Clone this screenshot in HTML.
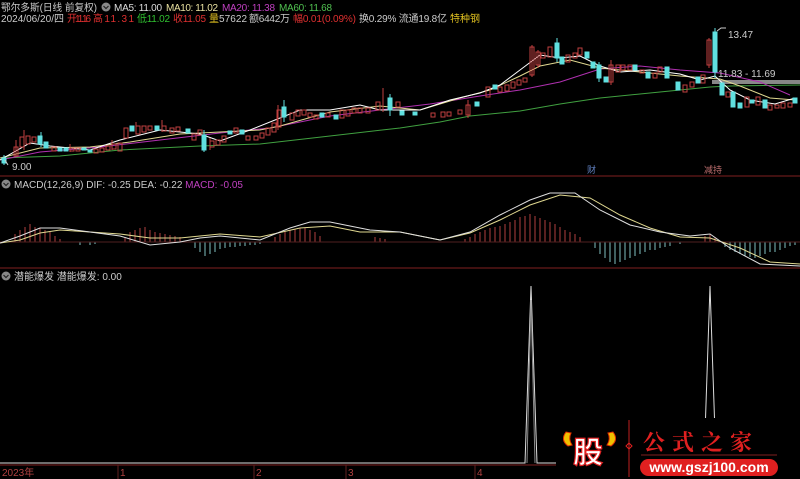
<!DOCTYPE html>
<html><head><meta charset="utf-8"><style>
body{margin:0;background:#000;width:800px;height:479px;overflow:hidden;font-family:"Liberation Sans","Noto Sans CJK SC",sans-serif}
svg{position:absolute;left:0;top:0}
.t{font-size:10px}
</style></head><body>
<svg width="800" height="479" viewBox="0 0 800 479">
<!-- header -->
<text x="1" y="11" class="t" fill="#ccc" textLength="96" lengthAdjust="spacingAndGlyphs">鄂尔多斯(日线 前复权)</text>
<circle cx="106" cy="7" r="4.5" fill="#888"/><path d="M103.5 6 l2.5 2.5 l2.5-2.5" stroke="#222" fill="none" stroke-width="1.2"/>
<text x="114" y="11" class="t" fill="#ddd" textLength="48">MA5: 11.00</text>
<text x="166" y="11" class="t" fill="#e8e0a0" textLength="52">MA10: 11.02</text>
<text x="222" y="11" class="t" fill="#c040c0" textLength="53">MA20: 11.38</text>
<text x="279" y="11" class="t" fill="#50c050" textLength="53">MA60: 11.68</text>
<text x="1" y="22" class="t" fill="#ccc" textLength="63">2024/06/20/四</text>
<text x="67" y="22" class="t" fill="#e03030" textLength="24">开11.16</text>
<text x="93" y="22" class="t" fill="#e03030" textLength="41">高11.31</text>
<text x="137" y="22" class="t" fill="#30c030" textLength="33">低11.02</text>
<text x="173" y="22" class="t" fill="#e03030" textLength="33">收11.05</text>
<text x="209" y="22" class="t" fill="#e0c020">量</text>
<text x="219" y="22" class="t" fill="#ccc" textLength="28">57622</text>
<text x="249" y="22" class="t" fill="#ccc" textLength="41">额6442万</text>
<text x="293" y="22" class="t" fill="#e03030" textLength="63">幅0.01(0.09%)</text>
<text x="359" y="22" class="t" fill="#ccc" textLength="88">换0.29% 流通19.8亿</text>
<text x="450" y="22" class="t" fill="#e0c020">特种钢</text>

<line x1="0" y1="176" x2="800" y2="176" stroke="#802020"/>
<line x1="0" y1="268" x2="800" y2="268" stroke="#802020"/>
<line x1="0" y1="465" x2="800" y2="465" stroke="#802020"/>
<rect x="712" y="80" width="88" height="4" fill="#888"/>
<polyline fill="none" stroke="#40a040" points="0,158 60,156 120,150 200,146 260,144 330,136 400,128 440,122 470,116 520,111 560,104 600,98 640,94 680,90 710,87 730,86 800,85"/>
<polyline fill="none" stroke="#b030b0" points="0,160 40,152 100,147 160,140 220,133 270,128 330,116 380,110 430,104 480,96 520,90 560,82 600,69 640,66 680,70 720,73 760,82 790,95"/>
<polyline fill="none" stroke="#e0d890" points="0,158 40,148 90,147 130,142 180,134 220,132 260,130 280,126 330,112 380,106 420,110 460,98 490,90 520,76 540,66 570,60 600,68 640,72 680,76 720,79 740,86 770,98 795,100"/>
<polyline fill="none" stroke="#fff" points="0,160 30,143 50,146 90,150 120,140 160,130 200,134 220,141 250,130 280,118 300,110 330,110 360,105 380,110 420,110 450,100 480,93 500,85 520,70 540,55 560,58 580,56 600,66 620,72 650,70 680,74 700,80 715,76 730,90 750,100 775,104 795,98"/>
<g fill="none" stroke="#c04040">
<path d="M24 130v20M16 140v16M70 144v8M112 140v10M136 122v12M162 120v12M210 138v12M278 105v25M383 88v24M468 100v18M532 45v32M538 50v18M611 60v25M709 38v30"/>
<rect x="14" y="147" width="4" height="9"/><rect x="20" y="137" width="4" height="10"/><rect x="26" y="136" width="4" height="8"/><rect x="32" y="137" width="4" height="5"/>
<rect x="52" y="147" width="4" height="4"/><rect x="70" y="148" width="4" height="3"/><rect x="76" y="148" width="4" height="3"/><rect x="94" y="149" width="4" height="4"/><rect x="100" y="148" width="4" height="4"/><rect x="106" y="146" width="4" height="4"/><rect x="112" y="144" width="4" height="5"/><rect x="118" y="143" width="4" height="8"/>
<rect x="124" y="128" width="4" height="10"/><rect x="136" y="126" width="4" height="8"/><rect x="142" y="126" width="4" height="6"/><rect x="148" y="126" width="4" height="4"/><rect x="162" y="126" width="4" height="5"/><rect x="170" y="128" width="4" height="5"/><rect x="176" y="127" width="4" height="4"/>
<rect x="192" y="134" width="4" height="6"/><rect x="198" y="130" width="4" height="5"/><rect x="210" y="141" width="4" height="6"/><rect x="216" y="140" width="4" height="5"/><rect x="222" y="136" width="4" height="6"/><rect x="234" y="128" width="4" height="5"/><rect x="246" y="136" width="4" height="4"/><rect x="254" y="136" width="4" height="4"/><rect x="260" y="133" width="4" height="5"/><rect x="266" y="128" width="4" height="7"/><rect x="272" y="123" width="4" height="9"/><rect x="277" y="110" width="4" height="17"/>
<rect x="290" y="113" width="4" height="7"/><rect x="296" y="110" width="4" height="6"/><rect x="302" y="110" width="4" height="5"/><rect x="308" y="113" width="4" height="4"/><rect x="314" y="115" width="4" height="4"/><rect x="326" y="113" width="4" height="4"/><rect x="340" y="110" width="4" height="8"/><rect x="346" y="110" width="4" height="6"/><rect x="352" y="108" width="4" height="5"/><rect x="358" y="108" width="4" height="5"/><rect x="366" y="108" width="4" height="5"/><rect x="376" y="102" width="4" height="8"/><rect x="396" y="102" width="4" height="5"/>
<rect x="431" y="113" width="4" height="4"/><rect x="441" y="112" width="4" height="5"/><rect x="447" y="112" width="4" height="4"/><rect x="458" y="110" width="4" height="4"/><rect x="466" y="105" width="4" height="10"/>
<rect x="486" y="87" width="4" height="10"/><rect x="498" y="87" width="4" height="5"/><rect x="505" y="85" width="4" height="6"/><rect x="511" y="82" width="4" height="6"/><rect x="517" y="80" width="4" height="5"/><rect x="523" y="78" width="4" height="4"/>
<rect x="530" y="47" width="4" height="28"/><rect x="536" y="52" width="4" height="13"/><rect x="541" y="53" width="4" height="5"/><rect x="548" y="47" width="4" height="10"/>
<rect x="566" y="55" width="4" height="7"/><rect x="573" y="53" width="4" height="5"/><rect x="578" y="48" width="4" height="7"/>
<rect x="609" y="65" width="4" height="17"/><rect x="616" y="65" width="4" height="7"/><rect x="621" y="65" width="4" height="5"/><rect x="628" y="65" width="4" height="5"/><rect x="640" y="70" width="4" height="3"/><rect x="653" y="73" width="4" height="5"/><rect x="658" y="67" width="4" height="5"/>
<rect x="683" y="85" width="4" height="7"/><rect x="690" y="82" width="4" height="5"/><rect x="701" y="75" width="4" height="8"/><rect x="707" y="40" width="4" height="25"/>
<rect x="726" y="92" width="4" height="5"/><rect x="745" y="97" width="4" height="10"/><rect x="756" y="97" width="4" height="8"/><rect x="768" y="105" width="4" height="5"/><rect x="775" y="105" width="4" height="3"/><rect x="781" y="103" width="4" height="5"/><rect x="788" y="103" width="4" height="4"/>
</g>
<g stroke="#60e0e0"><path d="M4 155v10M41 132v15M204 130v22M284 100v22M390 94v22M557 38v24M599 62v20M715 28v50"/></g>
<g fill="#60e0e0" stroke="#60e0e0">
<rect x="2" y="158" width="4" height="5"/><rect x="38" y="136" width="4" height="8"/><rect x="44" y="142" width="4" height="6"/><rect x="58" y="148" width="4" height="3"/><rect x="64" y="148" width="4" height="3"/><rect x="82" y="148" width="4" height="2"/><rect x="88" y="150" width="4" height="2"/>
<rect x="130" y="126" width="4" height="5"/><rect x="155" y="126" width="4" height="4"/><rect x="186" y="129" width="4" height="4"/><rect x="202" y="135" width="4" height="15"/><rect x="228" y="131" width="4" height="3"/><rect x="240" y="130" width="4" height="4"/>
<rect x="282" y="107" width="4" height="10"/><rect x="320" y="113" width="4" height="4"/><rect x="334" y="115" width="4" height="4"/><rect x="388" y="98" width="4" height="12"/>
<rect x="400" y="111" width="4" height="4"/><rect x="413" y="112" width="4" height="3"/><rect x="475" y="102" width="4" height="4"/><rect x="493" y="85" width="4" height="4"/>
<rect x="555" y="43" width="4" height="15"/><rect x="560" y="57" width="4" height="7"/><rect x="585" y="52" width="4" height="6"/><rect x="591" y="62" width="4" height="6"/><rect x="597" y="65" width="4" height="13"/><rect x="604" y="77" width="4" height="5"/>
<rect x="633" y="65" width="4" height="5"/><rect x="646" y="72" width="4" height="6"/><rect x="665" y="67" width="4" height="11"/><rect x="676" y="82" width="4" height="8"/><rect x="696" y="77" width="4" height="6"/>
<rect x="713" y="32" width="4" height="40"/><rect x="720" y="83" width="4" height="12"/><rect x="731" y="92" width="4" height="15"/><rect x="738" y="103" width="4" height="5"/><rect x="750" y="100" width="4" height="3"/><rect x="763" y="100" width="4" height="8"/><rect x="793" y="98" width="4" height="5"/>
</g>
<path d="M717 31 l4-3 h5" stroke="#ccc" fill="none"/>
<text x="728" y="38" class="t" fill="#ccc">13.47</text>
<text x="718" y="77" class="t" fill="#ccc">11.83 - 11.69</text>
<path d="M5 160 l3 5" stroke="#ccc"/>
<text x="12" y="170" class="t" fill="#ccc">9.00</text>
<text x="587" y="173" font-size="9" fill="#6080c0">财</text>
<text x="704" y="173" font-size="9" fill="#c07070">减持</text>

<circle cx="6" cy="184" r="4.5" fill="#888"/><path d="M3.5 183 l2.5 2.5 l2.5-2.5" stroke="#222" fill="none" stroke-width="1.2"/>
<text x="14" y="188" class="t" fill="#ccc">MACD(12,26,9) DIF: -0.25 DEA: -0.22 <tspan fill="#c040c0">MACD: -0.05</tspan></text>
<g stroke="#b04040">
<path d="M15 242v-8M20 242v-12M25 242v-15M30 242v-18M35 242v-15M40 242v-14M45 242v-12M50 242v-10M55 242v-6M60 242v-3M125 242v-5M130 242v-10M135 242v-12M140 242v-14M145 242v-15M150 242v-12M155 242v-10M160 242v-9M165 242v-8M170 242v-7M175 242v-6M180 242v-5M275 242v-5M280 242v-8M285 242v-10M290 242v-12M295 242v-13M300 242v-14M305 242v-14M310 242v-12M315 242v-10M320 242v-6M375 242v-5M380 242v-4M385 242v-3M465 242v-3M470 242v-5M475 242v-8M480 242v-10M485 242v-12M490 242v-14M495 242v-15M500 242v-16M505 242v-18M510 242v-20M515 242v-22M520 242v-25M525 242v-26M530 242v-28M535 242v-26M540 242v-24M545 242v-22M550 242v-20M555 242v-18M560 242v-15M565 242v-12M570 242v-10M575 242v-8M580 242v-5M705 242v-6M710 242v-8M715 242v-5"/>
</g>
<g stroke="#80c0c0">
<path d="M80 242v3M90 242v3M95 242v2M195 242v6M200 242v10M205 242v14M210 242v12M215 242v10M220 242v7M225 242v6M230 242v5M235 242v5M240 242v4M245 242v4M250 242v3M255 242v3M260 242v2M595 242v6M600 242v12M605 242v16M610 242v20M615 242v22M620 242v20M625 242v18M630 242v16M635 242v14M640 242v12M645 242v10M650 242v8M655 242v8M660 242v6M665 242v5M670 242v4M680 242v2M725 242v5M730 242v8M735 242v10M740 242v12M745 242v14M750 242v15M755 242v16M760 242v14M765 242v12M770 242v10M775 242v10M780 242v8M785 242v6M790 242v4M795 242v3"/>
</g>
<line x1="0" y1="242" x2="800" y2="242" stroke="#502020"/>
<polyline fill="none" stroke="#e0d890" points="0,243 20,240 40,233 60,230 90,232 120,234 150,238 180,238 200,236 220,234 260,237 300,228 330,226 360,232 400,232 440,240 470,233 500,220 530,205 560,195 590,198 620,215 650,228 680,237 710,238 740,248 770,262 800,264"/>
<polyline fill="none" stroke="#e0e0e0" points="0,243 20,236 40,228 60,228 90,232 120,236 150,245 180,242 200,238 220,236 260,240 290,228 310,222 330,222 370,230 400,232 440,240 470,232 500,215 530,200 550,193 575,193 600,210 630,225 660,232 690,236 710,234 730,248 760,264 800,266"/>

<circle cx="6" cy="276" r="4.5" fill="#888"/><path d="M3.5 275 l2.5 2.5 l2.5-2.5" stroke="#222" fill="none" stroke-width="1.2"/>
<text x="14" y="280" class="t" fill="#ccc">潜能爆发 潜能爆发: 0.00</text>
<polyline fill="none" stroke="#ddd" points="0,463 525,463 531,286 537,463 704,463 710,286 716,463 800,463"/>
<polyline fill="none" stroke="#888" points="527,463 531,300 535,463"/>
<text x="2" y="476" font-size="10" fill="#b04040">2023年</text>
<text x="120" y="476" font-size="10" fill="#b04040">1</text>
<text x="256" y="476" font-size="10" fill="#b04040">2</text>
<text x="348" y="476" font-size="10" fill="#b04040">3</text>
<text x="477" y="476" font-size="10" fill="#b04040">4</text>
<path d="M118 465v14M254 465v14M346 465v14M475 465v14" stroke="#602020"/>

<rect x="556" y="418" width="244" height="61" fill="#000"/>
<path d="M566 432 q-6 8 2 14 l4 -1 q-4-6 -1-12z" fill="#f0c000" stroke="#e03000"/>
<path d="M613 432 q6 8 -2 14 l-4 -1 q4-6 1-12z" fill="#f0c000" stroke="#e03000"/>
<text x="573" y="463" font-size="30" font-weight="bold" fill="#fff" stroke="#e02020" stroke-width="1.2" font-family="'Noto Sans CJK SC',sans-serif">股</text>
<line x1="629" y1="420" x2="629" y2="477" stroke="#c02020"/>
<path d="M629 443 l3 3 -3 3 -3-3z" fill="none" stroke="#e02020"/>
<text x="643" y="450" font-size="22" font-weight="bold" fill="#e02020" letter-spacing="7" font-family="'Noto Serif CJK SC',serif">公式之家</text>
<line x1="641" y1="455" x2="777" y2="455" stroke="#802020"/>
<rect x="640" y="459" width="138" height="17" rx="8.5" fill="#e02020"/>
<text x="709" y="472" font-size="14" font-weight="bold" fill="#fff" text-anchor="middle">www.gszj100.com</text>
</svg>
</body></html>
